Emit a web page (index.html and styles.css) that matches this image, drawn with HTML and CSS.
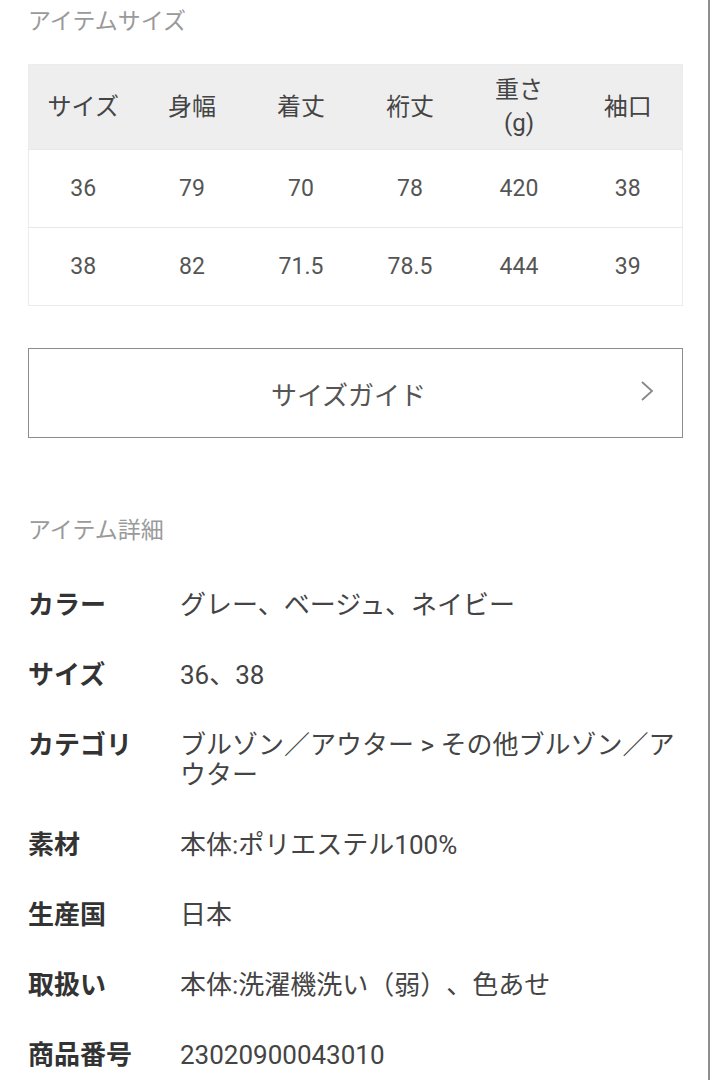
FILE: index.html
```html
<!DOCTYPE html>
<html lang="ja">
<head>
<meta charset="utf-8">
<link rel="stylesheet" href="styles.css">
</head>
<body>
<div class="page">
  <h2 class="section-title first">アイテムサイズ</h2>
  <table class="size-table">
    <thead>
      <tr>
        <th>サイズ</th><th>身幅</th><th>着丈</th><th>裄丈</th><th>重さ<br>(g)</th><th>袖口</th>
      </tr>
    </thead>
    <tbody>
      <tr><td>36</td><td>79</td><td>70</td><td>78</td><td>420</td><td>38</td></tr>
      <tr><td>38</td><td>82</td><td>71.5</td><td>78.5</td><td>444</td><td>39</td></tr>
    </tbody>
  </table>

  <a class="guide-btn">
    <span class="guide-label">サイズガイド</span>
    <svg class="chev" width="14" height="22" viewBox="0 0 14 22"><path d="M2 2 L12 11 L2 20" fill="none" stroke="#888" stroke-width="1.8"/></svg>
  </a>

  <h2 class="section-title second">アイテム詳細</h2>
  <dl class="details">
    <div class="row"><dt>カラー</dt><dd>グレー、ベージュ、ネイビー</dd></div>
    <div class="row"><dt>サイズ</dt><dd>36、38</dd></div>
    <div class="row"><dt>カテゴリ</dt><dd>ブルゾン／アウター &gt; その他ブルゾン／アウター</dd></div>
    <div class="row"><dt>素材</dt><dd>本体:ポリエステル100%</dd></div>
    <div class="row"><dt>生産国</dt><dd>日本</dd></div>
    <div class="row"><dt>取扱い</dt><dd>本体:洗濯機洗い（弱）、色あせ</dd></div>
    <div class="row"><dt>商品番号</dt><dd>23020900043010</dd></div>
  </dl>
</div>
</body>
</html>
```

FILE: styles.css
```css
html, body {
  margin: 0;
  padding: 0;
  background: #fff;
}
body {
  font-family: Roboto, "Noto Sans CJK JP", sans-serif;
  color: #444;
  text-spacing-trim: space-all;
}
.page {
  width: 655px;
  min-height: 1080px;
  padding: 7px 25px 0 28px;
  border-right: 2px solid #8e8e8e;
  box-sizing: content-box;
}
.section-title {
  margin: 0;
  font-size: 23px;
  font-weight: 400;
  line-height: 30px;
  color: #9a9a9a;
}
.section-title.first {
  margin-bottom: 27px;
}
.section-title.second {
  margin-top: 78px;
  margin-bottom: 44px;
}
.size-table {
  width: 655px;
  border-collapse: collapse;
  table-layout: fixed;
  border: 1px solid #ececec;
}
.size-table th {
  background: #eeeeee;
  height: 84px;
  font-size: 24px;
  font-weight: 400;
  line-height: 33px;
  color: #444;
  padding: 0;
  text-align: center;
}
.size-table td {
  height: 77px;
  font-size: 23px;
  color: #555;
  text-align: center;
  padding: 0;
  border-top: 1px solid #e8e8e8;
}
.guide-btn {
  display: flex;
  align-items: center;
  justify-content: center;
  position: relative;
  margin-top: 42px;
  height: 88px;
  padding-right: 14px;
  border: 1px solid #8c8c8c;
  color: #555;
  font-size: 26px;
}
.chev {
  position: absolute;
  right: 28px;
  top: 31px;
}
.details {
  margin: 0;
  display: flex;
  flex-direction: column;
  gap: 40px;
}
.row {
  display: flex;
  font-size: 26px;
  line-height: 30px;
}
.row dt {
  width: 152px;
  flex-shrink: 0;
  font-weight: 700;
  color: #333;
}
.row dd {
  margin: 0;
  flex: 1;
  color: #444;
}
```
